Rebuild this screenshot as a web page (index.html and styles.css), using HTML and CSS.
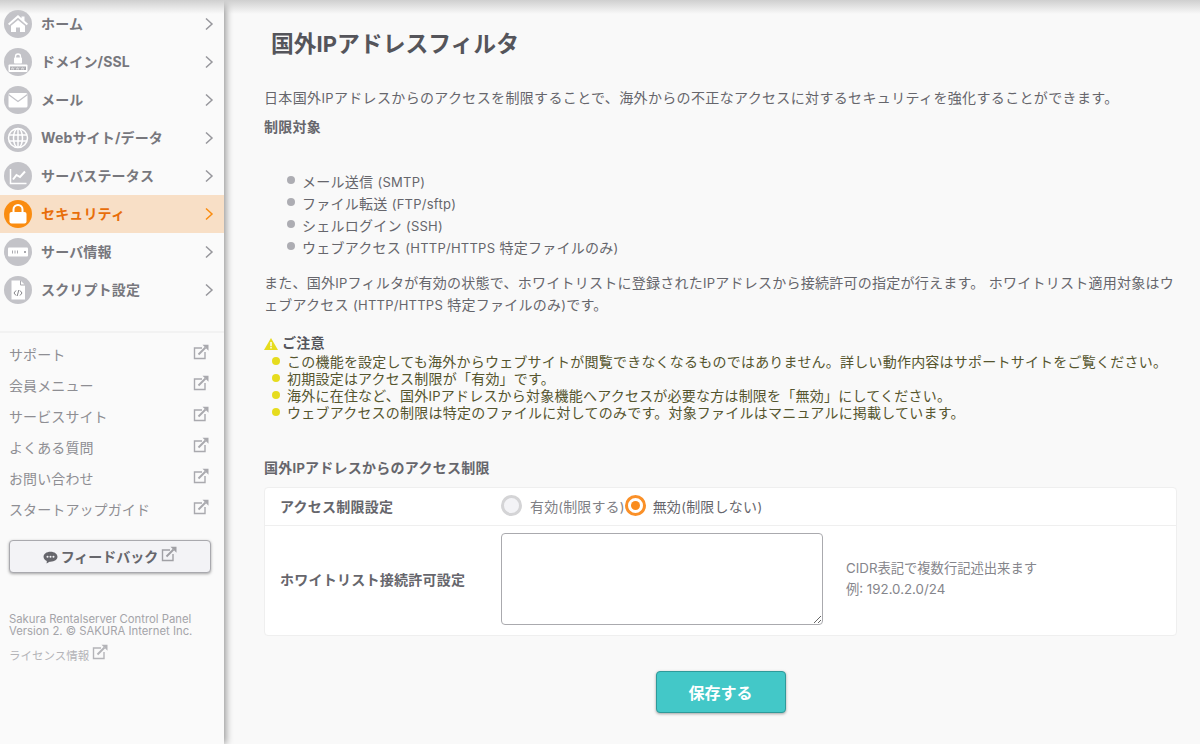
FILE: index.html
```html
<!DOCTYPE html>
<html lang="ja">
<head>
<meta charset="utf-8">
<title>国外IPアドレスフィルタ</title>
<link rel="stylesheet" href="styles.css">
</head>
<body>
<svg class="defs" width="0" height="0">
  <symbol id="ext" viewBox="0 0 16 16"><path d="M9 4H1.500v10.500H12V8" fill="none" stroke="currentColor" stroke-width="1.400"/><path d="M5.500 10.500 12.500 3.500" fill="none" stroke="currentColor" stroke-width="2"/><path d="M9.500.8h6v6z" fill="currentColor"/></symbol>
  <symbol id="chev" viewBox="0 0 10 14"><path d="M2 1.500 8 7l-6 5.500" fill="none" stroke="currentColor" stroke-width="1.500"/></symbol>
</svg>
<div class="app">
  <aside class="sidebar">
    <nav class="menu">
      <a class="item"><span class="ic"><svg viewBox="0 0 28 28"><path d="M14 5 4 13.800l1.300 1.500L14 7.800l8.700 7.500 1.300-1.500-3.500-3V6.500h-3v1.800z" fill="#fff"/><path d="M7 15.800 14 10l7 5.800V22h-5v-4.500h-4V22H7z" fill="#fff"/></svg></span><span class="lb">ホーム</span><svg class="chev"><use href="#chev"/></svg></a>
      <a class="item"><span class="ic"><svg viewBox="0 0 28 28"><path d="M11.500 10V8.500a2.500 2.500 0 0 1 5 0V10" fill="none" stroke="#fff" stroke-width="1.300"/><rect x="10" y="9.500" width="8" height="6" rx=".8" fill="#fff"/><rect x="4.500" y="16.500" width="19" height="7.500" rx="1" fill="#fff"/><path d="M6 18.500h16v3.500H6z" fill="#a9a9ae"/><path d="M7 19.500l.8 2 .8-2 .8 2 .8-2M12 19.500l.8 2 .8-2 .8 2 .8-2M17 19.500l.8 2 .8-2 .8 2 .8-2" fill="none" stroke="#fff" stroke-width=".5"/></svg></span><span class="lb">ドメイン/SSL</span><svg class="chev"><use href="#chev"/></svg></a>
      <a class="item"><span class="ic"><svg viewBox="0 0 28 28"><rect x="4.500" y="7" width="19" height="14.500" rx="1.500" fill="#fff"/><path d="M4.500 8.500 14 15.500l9.500-7" fill="none" stroke="#c3c3c8" stroke-width="1.300"/></svg></span><span class="lb">メール</span><svg class="chev"><use href="#chev"/></svg></a>
      <a class="item"><span class="ic"><svg viewBox="0 0 28 28"><g fill="none" stroke="#fff" stroke-width="1.500"><circle cx="14" cy="14" r="9.500"/><ellipse cx="14" cy="14" rx="4.500" ry="9.500"/><path d="M14 4.500v19M5 11h18M5 17h18"/></g></svg></span><span class="lb">Webサイト/データ</span><svg class="chev"><use href="#chev"/></svg></a>
      <a class="item"><span class="ic"><svg viewBox="0 0 28 28"><path d="M6.500 7v14.500h16" fill="none" stroke="#fff" stroke-width="1.500"/><path d="M9 17.500l3.500-4.500 3.500 2 5-5.500" fill="none" stroke="#fff" stroke-width="2"/></svg></span><span class="lb">サーバステータス</span><svg class="chev"><use href="#chev"/></svg></a>
      <a class="item active"><span class="ic"><svg viewBox="0 0 28 28"><path d="M9.500 13V9.500a4.500 4.500 0 0 1 9 0V13" fill="none" stroke="#fff" stroke-width="2"/><rect x="5.500" y="12" width="17" height="11.500" rx="2" fill="#fff"/></svg></span><span class="lb">セキュリティ</span><svg class="chev"><use href="#chev"/></svg></a>
      <a class="item"><span class="ic"><svg viewBox="0 0 28 28"><rect x="4" y="9.500" width="20" height="9" rx="1" fill="#fff"/><path d="M8 12.500h1v3H8zM10.500 12.500h1v3h-1zM13 12.500h1v3h-1zM20 13h2v2h-2z" fill="#a9a9ae"/></svg></span><span class="lb">サーバ情報</span><svg class="chev"><use href="#chev"/></svg></a>
      <a class="item"><span class="ic"><svg viewBox="0 0 28 28"><path d="M7.500 4.500h9l4.500 4.500v14.500H7.500z" fill="#fff"/><path d="M16.500 4.500V9H21" fill="none" stroke="#a9a9ae"/><path d="M12 14.500l-2 2.500 2 2.500M16 14.500l2 2.500-2 2.500M14.800 14l-1.600 6" fill="none" stroke="#77777d" stroke-width=".9"/></svg></span><span class="lb">スクリプト設定</span><svg class="chev"><use href="#chev"/></svg></a>
    </nav>
    <ul class="links">
      <li><span>サポート</span><svg class="ext"><use href="#ext"/></svg></li>
      <li><span>会員メニュー</span><svg class="ext"><use href="#ext"/></svg></li>
      <li><span>サービスサイト</span><svg class="ext"><use href="#ext"/></svg></li>
      <li><span>よくある質問</span><svg class="ext"><use href="#ext"/></svg></li>
      <li><span>お問い合わせ</span><svg class="ext"><use href="#ext"/></svg></li>
      <li><span>スタートアップガイド</span><svg class="ext"><use href="#ext"/></svg></li>
    </ul>
    <button class="feedback" type="button"><svg class="chat" viewBox="0 0 16 14"><path d="M8 .8C3.600.8.500 3.200.500 6.200c0 2 1.400 3.700 3.500 4.600L3.800 13.500 7 11.500h1c4.400 0 7.500-2.300 7.500-5.300S12.400.8 8 .8z" fill="currentColor"/><g fill="#f3f3f6"><circle cx="4.800" cy="6.200" r="1.100"/><circle cx="8" cy="6.200" r="1.100"/><circle cx="11.200" cy="6.200" r="1.100"/></g></svg><span class="fb-text">フィードバック</span><svg class="ext fb-ext"><use href="#ext"/></svg></button>
    <p class="copy">Sakura Rentalserver Control Panel<br>Version 2. © SAKURA Internet Inc.</p>
    <p class="license"><span class="lic-text">ライセンス情報</span><svg class="ext lic-ext"><use href="#ext"/></svg></p>
  </aside>
  <main class="main">
    <h1>国外<span class="h-la">IP</span>アドレスフィルタ</h1>
    <p class="intro">日本国外<span class="la">IP</span>アドレスからのアクセスを制限することで、海外からの不正なアクセスに対するセキュリティを強化することができます。</p>
    <p class="subhead">制限対象</p>
    <ul class="targets">
      <li>メール送信 <span class="la">(SMTP)</span></li>
      <li>ファイル転送 <span class="la">(FTP/sftp)</span></li>
      <li>シェルログイン <span class="la">(SSH)</span></li>
      <li>ウェブアクセス <span class="la">(HTTP/HTTPS</span> 特定ファイルのみ<span class="la">)</span></li>
    </ul>
    <p class="para">また、国外<span class="la">IP</span>フィルタが有効の状態で、ホワイトリストに登録された<span class="la">IP</span>アドレスから接続許可の指定が行えます。 ホワイトリスト適用対象はウェブアクセス <span class="la">(HTTP/HTTPS</span> 特定ファイルのみ<span class="la">)</span>です。</p>
    <section class="notice">
      <div class="notice-title"><svg class="warn" viewBox="0 0 14 12"><path d="M7 0 14 12H0z" fill="#e6dc1e"/><path d="M6.300 4h1.400v4.300H6.300zM6.300 9h1.400v1.400H6.300z" fill="#fff"/></svg><span>ご注意</span></div>
      <ul>
        <li>この機能を設定しても海外からウェブサイトが閲覧できなくなるものではありません。詳しい動作内容はサポートサイトをご覧ください。</li>
        <li>初期設定はアクセス制限が「有効」です。</li>
        <li>海外に在住など、国外<span class="la">IP</span>アドレスから対象機能へアクセスが必要な方は制限を「無効」にしてください。</li>
        <li>ウェブアクセスの制限は特定のファイルに対してのみです。対象ファイルはマニュアルに掲載しています。</li>
      </ul>
    </section>
    <h2>国外<span class="la">IP</span>アドレスからのアクセス制限</h2>
    <div class="card">
      <div class="row row-a">
        <div class="label">アクセス制限設定</div>
        <div class="radios">
          <span class="radio"></span><span class="rtext">有効<span class="la">(</span>制限する<span class="la">)</span></span><span class="radio on"></span><span class="rtext off-t">無効<span class="la">(</span>制限しない<span class="la">)</span></span>
        </div>
      </div>
      <div class="row row-b">
        <div class="label">ホワイトリスト接続許可設定</div>
        <textarea class="ta"></textarea>
        <div class="hint">CIDR表記で複数行記述出来ます<br>例: 192.0.2.0/24</div>
      </div>
    </div>
    <div class="actions"><button class="save" type="button">保存する</button></div>
  </main>
</div>
</body>
</html>
```

FILE: styles.css
```css
* { box-sizing: border-box; }
html, body { margin: 0; height: 100%; overflow: hidden; }
body {
  font-family: Inter, "Noto Sans CJK JP", sans-serif;
  font-size: 14px;
  color: #66666c;
  background: #f9f9f9;
}
.defs { position: absolute; }
.la { font-size: 13px; }
.app { display: flex; height: 744px; position: relative; }
.app::before {
  content: "";
  position: absolute;
  top: 0; left: 0; right: 0;
  height: 14px;
  background: linear-gradient(#cfcfcf, rgba(249,249,249,0));
  z-index: 3;
  pointer-events: none;
}
.sidebar {
  width: 224px;
  flex: none;
  background: #fafafa;
  box-shadow: 2px 0 7px rgba(0,0,0,.4);
  padding-top: 5px;
  position: relative;
  z-index: 2;
}
.menu { border-bottom: 2px solid #f2f2f2; padding-bottom: 22px; }
.item {
  display: flex;
  align-items: center;
  height: 38px;
  padding: 0 10px 0 4px;
  color: #77777d;
  font-weight: 700;
  font-size: 14px;
}
.ic {
  width: 28px; height: 28px;
  border-radius: 50%;
  background: #c3c3c8;
  flex: none;
}
.ic svg { display: block; width: 28px; height: 28px; }
.lb { margin-left: 9px; flex: 1; padding-bottom: 2px; letter-spacing: .15px; }
.chev { width: 10px; height: 14px; color: #97979c; }
.item.active { background: #f8dfc6; color: #e86e0a; }
.item.active .ic { background: #fa8c10; }
.item.active .chev { color: #fa8c10; }
.links { list-style: none; margin: 0; padding: 5px 15px 0 9px; }
.links li {
  display: flex;
  justify-content: space-between;
  align-items: center;
  height: 31px;
  color: #8e8e93;
  font-size: 14px;
  letter-spacing: .1px;
}
.ext { width: 16px; height: 16px; color: #a9a9ae; margin-top: -3px; }
.feedback {
  display: flex;
  align-items: center;
  justify-content: center;
  width: 202px;
  height: 33px;
  margin: 16px 0 0 9px;
  padding: 0;
  background: #f3f3f6;
  border: 1px solid #a9a9ae;
  border-radius: 4px;
  box-shadow: 0 1px 3px rgba(0,0,0,.35);
  font: 700 14px Inter, "Noto Sans CJK JP", sans-serif;
  color: #66666c;
}
.fb-text { padding-bottom: 2px; }
.chat { width: 15px; height: 13px; margin: 1px 3px 0 0; color: #66666c; }
.fb-ext { margin: -5px 0 0 3px; color: #a0a0a5; }
.copy {
  margin: 41px 0 0 9px;
  font-size: 11.300px;
  line-height: 11.500px;
  color: #a4a4a9;
}
.license {
  margin: 7px 0 0 9px;
  font-size: 11.500px;
  color: #b4b4b8;
  display: flex;
  align-items: flex-start;
}
.lic-text { margin-top: 3px; }
.lic-ext { margin: 0 0 0 3px; color: #b4b4b8; }
.main { flex: 1; padding: 0 23px 0 40px; min-width: 0; letter-spacing: .25px; }
h1 {
  margin: 27px 0 0 7px;
  font-size: 22.800px;
  line-height: 34px;
  font-weight: 700;
  color: #55555b;
  letter-spacing: 0;
}
.h-la { font-size: 22px; }
.intro { margin: 27px 0 0; line-height: 20px; letter-spacing: .35px; }
.subhead { margin: 9px 0 0; font-weight: 700; line-height: 20px; }
.targets { list-style: none; margin: 34px 0 0; padding: 0 0 0 23px; }
.targets li { position: relative; height: 22px; line-height: 22px; padding-left: 15px; }
.targets li::before {
  content: "";
  position: absolute;
  left: 0; top: 5px;
  width: 8px; height: 8px;
  border-radius: 50%;
  background: #adadb3;
}
.para { margin: 13px 0 0; line-height: 22px; line-break: loose; }
.notice { margin-top: 17px; color: #55552e; }
.notice-title { display: flex; align-items: center; height: 18px; font-weight: 700; color: #55555b; }
.warn { width: 14px; height: 12px; margin: 3px 4px 0 0; }
.notice ul { list-style: none; margin: 3px 0 0; padding: 0 0 0 23px; letter-spacing: .22px; }
.notice li { position: relative; height: 17px; line-height: 15px; }
.notice li::before {
  content: "";
  position: absolute;
  left: -15px; top: 3px;
  width: 8px; height: 8px;
  border-radius: 50%;
  background: #e6dc1e;
}
h2 { margin: 37px 0 0; font-size: 14px; line-height: 18px; font-weight: 700; color: #66666c; }
.card {
  margin-top: 10px;
  background: #fff;
  border: 1px solid #efefef;
  border-radius: 4px;
}
.row { display: flex; align-items: center; padding-left: 15px; }
.row-a { height: 38px; border-bottom: 1px solid #efefef; padding-bottom: 2px; }
.row-b { height: 109px; padding-bottom: 3px; }
.label { width: 221px; flex: none; font-weight: 700; color: #66666c; }
.radios { display: flex; align-items: center; }
.radio {
  width: 21px; height: 21px;
  border-radius: 50%;
  border: 3px solid #d4d4d6;
  background: #f3f3f6;
  flex: none;
}
.radio.on { border-color: #fa9028; background: #fff; position: relative; }
.radio.on::after {
  content: "";
  position: absolute;
  left: 3px; top: 3px;
  width: 9px; height: 9px;
  border-radius: 50%;
  background: #fa8c1e;
}
.rtext { margin-left: 8px; color: #808085; letter-spacing: .14px; }
.off-t { color: #66666c; margin-left: 7px; letter-spacing: .25px; }
.ta {
  width: 322px;
  height: 92px;
  background: #fff;
  border: 1px solid #aaaaae;
  border-radius: 4px;
  flex: none;
  margin: 0;
}
.hint { margin-left: 23px; line-height: 21px; color: #85858b; font-size: 13.300px; letter-spacing: 0; }
.actions { display: flex; justify-content: center; margin-top: 35px; }
.save {
  width: 130px;
  height: 42px;
  background: #43c8c8;
  border: 1px solid #2f9a9a;
  border-radius: 4px;
  box-shadow: 0 1px 3px rgba(0,0,0,.35);
  font: 700 16px Inter, "Noto Sans CJK JP", sans-serif;
  color: #fff;
  padding: 0;
}
```
